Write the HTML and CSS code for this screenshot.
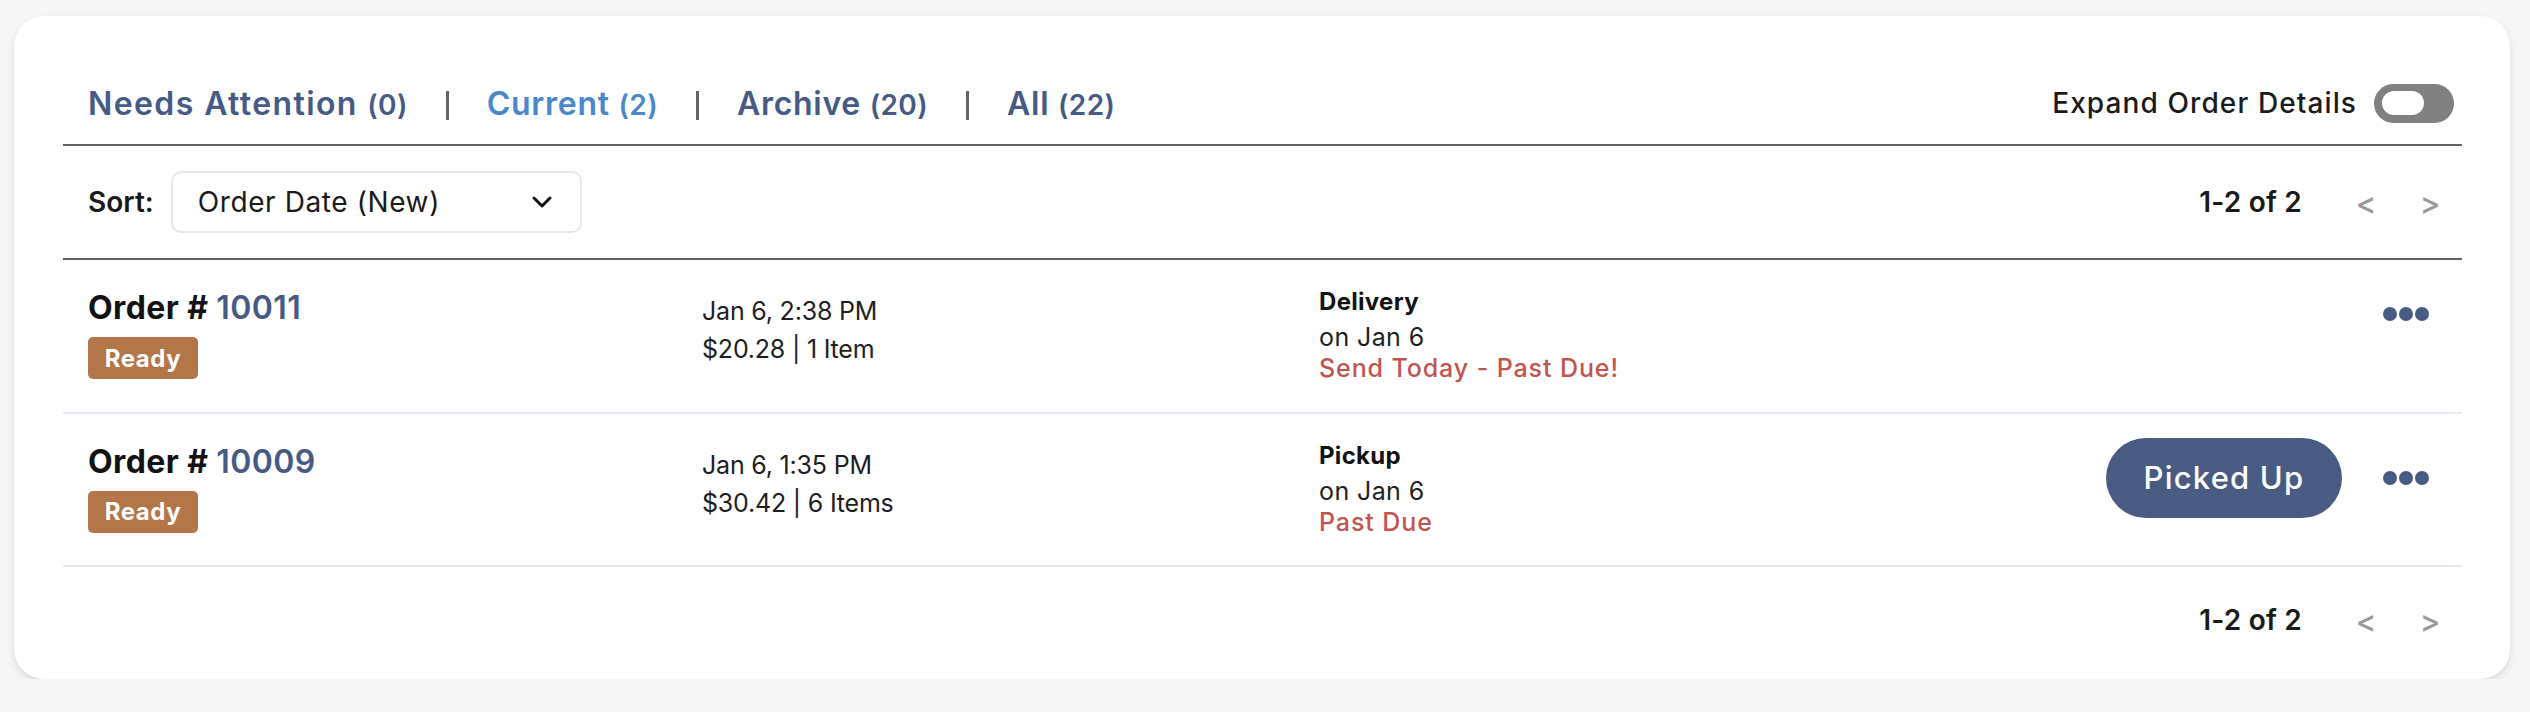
FILE: index.html
```html
<!DOCTYPE html>
<html lang="en">
<head>
<meta charset="utf-8">
<title>Orders</title>
<link rel="stylesheet" href="styles.css">
</head>
<body>
<div class="page">
  <section class="card">
    <header class="tabs-bar">
      <nav class="tabs">
        <a class="tab tab-wide">Needs Attention <span class="count">(0)</span></a>
        <span class="sep"></span>
        <a class="tab active">Current <span class="count">(2)</span></a>
        <span class="sep"></span>
        <a class="tab">Archive <span class="count">(20)</span></a>
        <span class="sep"></span>
        <a class="tab">All <span class="count">(22)</span></a>
      </nav>
      <div class="expand">
        <span class="expand-label">Expand Order Details</span>
        <span class="toggle"><span class="knob"></span></span>
      </div>
    </header>

    <div class="toolbar">
      <div class="sort">
        <span class="sort-label">Sort:</span>
        <div class="select">
          <span class="select-text">Order Date (New)</span>
          <svg class="chevron" width="20" height="12" viewBox="0 0 20 12"><polyline points="2,2 10,10 18,2" fill="none" stroke="#111" stroke-width="3" stroke-linecap="round" stroke-linejoin="round"/></svg>
        </div>
      </div>
      <div class="pager">
        <span class="pager-text">1-2 of 2</span>
        <span class="pager-btn">&lt;</span>
        <span class="pager-btn">&gt;</span>
      </div>
    </div>

    <div class="orders">
      <div class="order">
        <div class="col-id">
          <div class="order-title">Order # <span class="order-num">10011</span></div>
          <span class="badge">Ready</span>
        </div>
        <div class="col-meta">
          <div class="meta-line">Jan 6, 2:38 PM</div>
          <div class="meta-line">$20.28 | 1 Item</div>
        </div>
        <div class="col-fulfil">
          <div class="fulfil-type">Delivery</div>
          <div class="fulfil-date">on Jan 6</div>
          <div class="fulfil-warn">Send Today - Past Due!</div>
        </div>
        <div class="col-actions">
          <span class="more"><svg width="46" height="14" viewBox="0 0 46 14"><circle cx="7" cy="7" r="7"/><circle cx="23" cy="7" r="7"/><circle cx="39" cy="7" r="7"/></svg></span>
        </div>
      </div>

      <div class="order">
        <div class="col-id">
          <div class="order-title">Order # <span class="order-num">10009</span></div>
          <span class="badge">Ready</span>
        </div>
        <div class="col-meta">
          <div class="meta-line">Jan 6, 1:35 PM</div>
          <div class="meta-line">$30.42 | 6 Items</div>
        </div>
        <div class="col-fulfil">
          <div class="fulfil-type">Pickup</div>
          <div class="fulfil-date">on Jan 6</div>
          <div class="fulfil-warn">Past Due</div>
        </div>
        <div class="col-actions">
          <button class="action-btn">Picked Up</button>
          <span class="more"><svg width="46" height="14" viewBox="0 0 46 14"><circle cx="7" cy="7" r="7"/><circle cx="23" cy="7" r="7"/><circle cx="39" cy="7" r="7"/></svg></span>
        </div>
      </div>
    </div>

    <footer class="footer">
      <div class="pager">
        <span class="pager-text">1-2 of 2</span>
        <span class="pager-btn">&lt;</span>
        <span class="pager-btn">&gt;</span>
      </div>
    </footer>
  </section>
</div>
</body>
</html>
```

FILE: styles.css
```css
* { box-sizing: border-box; }

html, body {
  margin: 0;
  padding: 0;
  background: #f6f6f6;
}

body {
  font-family: "Inter", "Noto Sans", sans-serif;
  color: #1a1a1a;
}

.page {
  padding: 16px 20px 0 14px;
}

.card {
  width: 2496px;
  height: 663px;
  background: #ffffff;
  border-radius: 30px;
  box-shadow: 0 4px 8px rgba(0, 0, 0, 0.10), 0 1px 2px rgba(0, 0, 0, 0.05);
  padding: 48px 48px 0 49px;
}

/* ---------- tabs ---------- */
.tabs-bar {
  height: 82px;
  border-bottom: 2px solid #646464;
  display: flex;
  align-items: center;
  justify-content: space-between;
  padding: 0 8px 2px 25px;
}

.tabs {
  display: flex;
  align-items: center;
}

.tab {
  font-size: 32px;
  font-weight: 600;
  letter-spacing: 0.7px;
  color: #475a85;
  white-space: nowrap;
}

.tab-wide { letter-spacing: 1.4px; }

.tab.active { color: #4a87cb; }

.count {
  font-size: 28px;
  font-weight: 600;
  letter-spacing: 0.4px;
}

.sep {
  width: 3px;
  height: 29px;
  background: #666666;
  margin: 4px 38px 0 38px;
}

.expand {
  display: flex;
  align-items: center;
  gap: 17px;
}

.expand-label {
  font-size: 28px;
  font-weight: 500;
  letter-spacing: 1.1px;
  color: #1a1a1a;
}

.toggle {
  width: 80px;
  height: 39px;
  border-radius: 20px;
  background: #808080;
  display: flex;
  align-items: center;
  padding: 0 8px;
}

.knob {
  width: 42px;
  height: 24px;
  border-radius: 12px;
  background: #ffffff;
}

/* ---------- toolbar ---------- */
.toolbar {
  height: 114px;
  border-bottom: 2px solid #646464;
  display: flex;
  align-items: center;
  justify-content: space-between;
  padding: 0 0 0 25px;
}

.sort {
  display: flex;
  align-items: center;
  gap: 17px;
}

.sort-label {
  font-size: 28px;
  font-weight: 600;
  letter-spacing: 0;
  color: #1a1a1a;
}

.select {
  width: 411px;
  height: 62px;
  border: 2px solid #e3e8ef;
  border-radius: 10px;
  display: flex;
  align-items: center;
  justify-content: space-between;
  padding: 0 28px 0 25px;
}

.select-text {
  font-size: 28px;
  font-weight: 400;
  letter-spacing: 0.6px;
  color: #1a1a1a;
}

.chevron { display: block; }

.pager {
  display: flex;
  align-items: center;
}

.pager-text {
  font-size: 28px;
  font-weight: 600;
  letter-spacing: 0.2px;
  color: #1a1a1a;
  margin-right: 32px;
}

.pager-btn {
  font-size: 31px;
  font-weight: 500;
  color: #9a9a9a;
  width: 64px;
  text-align: center;
}

/* ---------- orders ---------- */
.order {
  height: 153.5px;
  border-bottom: 2px solid #e6eaf0;
  display: grid;
  grid-template-columns: 614px 617px 1fr auto;
  align-items: start;
  padding-left: 25px;
}

.col-id {
  padding-top: 28px;
}

.order-title {
  font-size: 32px;
  line-height: 40px;
  font-weight: 700;
  letter-spacing: 0.4px;
  color: #121212;
}

.order-num {
  font-weight: 600;
  color: #475a85;
}

.badge {
  display: inline-flex;
  align-items: center;
  justify-content: center;
  margin-top: 9px;
  width: 110px;
  height: 42px;
  border-radius: 5px;
  background: #b37649;
  color: #ffffff;
  font-size: 24px;
  font-weight: 700;
  letter-spacing: 0.5px;
}

.col-meta {
  padding-top: 32px;
}

.meta-line {
  font-size: 25px;
  line-height: 38px;
  font-weight: 400;
  letter-spacing: -0.2px;
  color: #1e1e1e;
}

.col-fulfil {
  padding-top: 26px;
}

.fulfil-type {
  font-size: 24px;
  line-height: 32px;
  font-weight: 700;
  letter-spacing: 0.3px;
  color: #121212;
}

.fulfil-date {
  margin-top: 4px;
  font-size: 25px;
  line-height: 31px;
  font-weight: 400;
  letter-spacing: 0.4px;
  color: #1e1e1e;
}

.fulfil-warn {
  font-size: 25px;
  line-height: 31px;
  font-weight: 500;
  letter-spacing: 0.9px;
  color: #c25450;
}

.col-actions {
  margin-top: 24px;
  display: flex;
  align-items: center;
  padding-right: 33px;
}

.action-btn {
  width: 236px;
  height: 80px;
  border: none;
  border-radius: 40px;
  background: #4a5b83;
  color: #ffffff;
  font-family: "Inter", "Noto Sans", sans-serif;
  font-size: 31px;
  font-weight: 500;
  letter-spacing: 1.2px;
  margin-right: 41px;
  padding: 0;
}

.more {
  height: 59px;
  display: flex;
  align-items: center;
}

.more svg {
  display: block;
  fill: #4a5b83;
}

/* ---------- footer ---------- */
.footer {
  height: 106px;
  display: flex;
  align-items: center;
  justify-content: flex-end;
  padding: 0;
}
```
